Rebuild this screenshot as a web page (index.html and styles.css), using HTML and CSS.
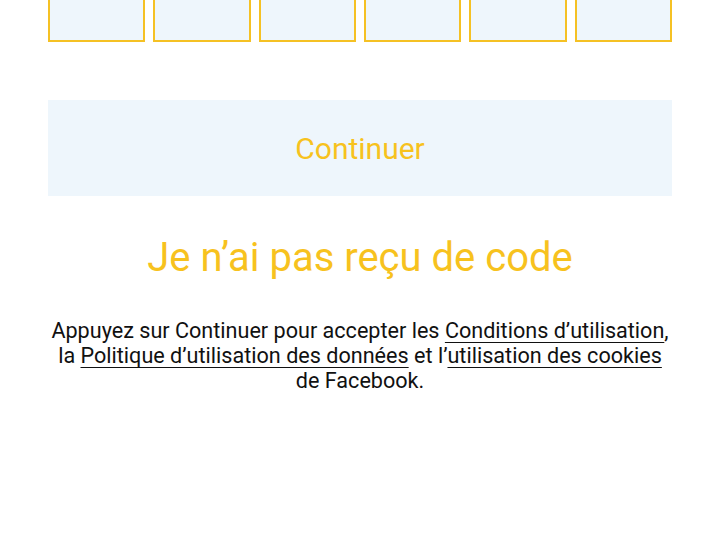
FILE: index.html
```html
<!DOCTYPE html>
<html lang="fr">
<head>
<meta charset="utf-8">
<link rel="stylesheet" href="styles.css">
</head>
<body>
<main class="page">
  <div class="code-row">
    <div class="code-box"></div>
    <div class="code-box"></div>
    <div class="code-box"></div>
    <div class="code-box"></div>
    <div class="code-box"></div>
    <div class="code-box"></div>
  </div>
  <button class="continue-btn">Continuer</button>
  <a class="no-code">Je n’ai pas reçu de code</a>
  <p class="legal">Appuyez sur Continuer pour accepter les <u>Conditions d’utilisation</u>, la <u>Politique d’utilisation des données</u> et l’<u>utilisation des cookies</u> de Facebook.</p>
</main>
</body>
</html>
```
FILE: styles.css
```css
html, body {
  margin: 0;
  padding: 0;
  background: #ffffff;
}
.page {
  width: 720px;
  height: 550px;
  overflow: hidden;
  padding: 0 48px;
  box-sizing: border-box;
  display: flex;
  flex-direction: column;
  font-family: Roboto, "Liberation Sans", sans-serif;
}
.code-row {
  display: flex;
  gap: 8px;
  margin-top: -20px;
}
.code-box {
  flex: 1;
  height: 62px;
  box-sizing: border-box;
  border: 2px solid #F5C124;
  background: #EEF6FC;
}
.continue-btn {
  margin-top: 58px;
  height: 96px;
  border: none;
  background: #EEF6FC;
  color: #F7C21E;
  font-family: Roboto, "Liberation Sans", sans-serif;
  font-size: 30px;
  padding: 0;
}
.no-code {
  margin-top: 38px;
  text-align: center;
  font-size: 40px;
  line-height: 48px;
  color: #F7C21E;
}
.legal {
  margin: 36px 0 0;
  text-align: center;
  font-size: 21.6px;
  line-height: 25px;
  color: #111111;
}
.legal u {
  text-decoration-thickness: 1px;
  text-underline-offset: 4px;
}
```
